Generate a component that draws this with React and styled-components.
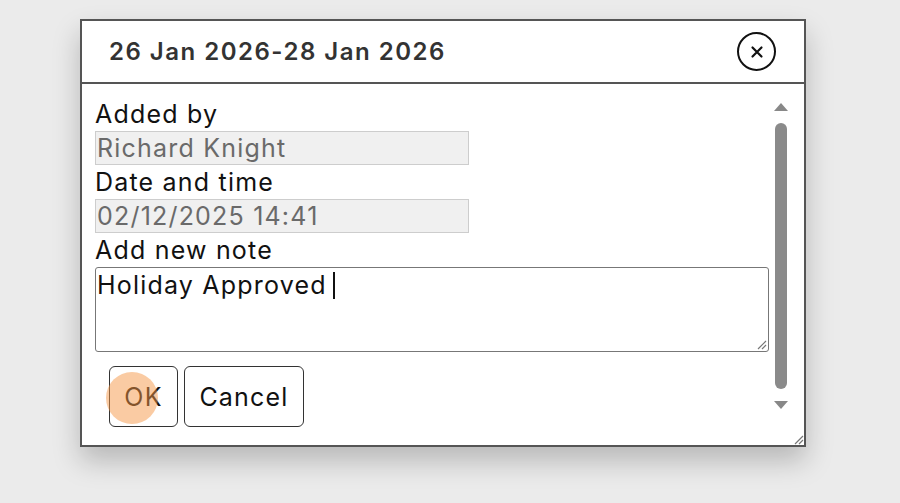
import React from 'react';
import styled, { createGlobalStyle } from 'styled-components';

const GlobalStyle = createGlobalStyle`
  body {
    margin: 0;
    background: #ebebeb;
    font-family: Inter, "Noto Sans", sans-serif;
    letter-spacing: 1.2px;
  }
`;

const Page = styled.div`
  height: 503px;
  padding: 19px 0 0 80px;
  box-sizing: border-box;
  overflow: hidden;
`;

const Dialog = styled.div`
  position: relative;
  width: 726px;
  height: 428px;
  box-sizing: border-box;
  border: 2px solid #555;
  background: #fff;
  box-shadow: 0 14px 26px rgba(0, 0, 0, 0.22);
  display: flex;
  flex-direction: column;
`;

const Header = styled.div`
  height: 61px;
  flex-shrink: 0;
  border-bottom: 2px solid #555;
  display: flex;
  align-items: center;
  justify-content: space-between;
  padding: 0 28px 0 27px;
`;

const Title = styled.h1`
  margin: 0;
  font-size: 24px;
  font-weight: 600;
  color: #333;
  letter-spacing: 1.5px;
`;

const CloseButton = styled.button`
  width: 39px;
  height: 39px;
  border-radius: 50%;
  border: 2px solid #111;
  background: #fff;
  display: flex;
  align-items: center;
  justify-content: center;
  padding: 0;
`;

const Body = styled.div`
  flex: 1;
  display: flex;
`;

const Content = styled.div`
  flex: 1;
  padding: 13px 0 0 13px;
  display: flex;
  flex-direction: column;
  align-items: flex-start;
`;

const Label = styled.div`
  height: 34px;
  line-height: 34px;
  font-size: 25px;
  color: #111;
`;

const ReadOnlyField = styled.div`
  width: 374px;
  height: 34px;
  box-sizing: border-box;
  background: #f0f0f0;
  border: 1px solid #cdcdcd;
  padding: 0 1px;
  line-height: 32px;
  font-size: 25px;
  color: #6a6a6a;
`;

const NoteArea = styled.div`
  position: relative;
  width: 674px;
  height: 85px;
  box-sizing: border-box;
  border: 1px solid #777;
  border-radius: 3px;
  padding: 0 1px;
  line-height: 34px;
  font-size: 25px;
  color: #111;
`;

const Caret = styled.span`
  display: inline-block;
  width: 2px;
  height: 27px;
  margin-left: 6px;
  background: #111;
  vertical-align: -5px;
`;

const Grip = styled.svg`
  position: absolute;
  right: 1px;
  bottom: 1px;
`;

const Actions = styled.div`
  display: flex;
  gap: 6px;
  margin: 14px 0 0 14px;
`;

const Button = styled.button`
  position: relative;
  height: 61px;
  width: ${p => p.$w}px;
  border: 1px solid #333;
  border-radius: 6px;
  background: #fff;
  font-family: inherit;
  font-size: 25px;
  letter-spacing: 1.2px;
  color: #111;
  padding: 0;
`;

const ClickMark = styled.span`
  position: absolute;
  left: -4px;
  top: 5px;
  width: 52px;
  height: 52px;
  border-radius: 50%;
  background: rgba(246, 152, 72, 0.5);
`;

const Scrollbar = styled.div`
  width: 34px;
  display: flex;
  flex-direction: column;
  align-items: center;
  padding: 19px 12px 24px 0;
  box-sizing: border-box;
  gap: 12px;
`;

const Arrow = styled.div`
  width: 0;
  height: 0;
  border-left: 7px solid transparent;
  border-right: 7px solid transparent;
  ${p => (p.$down ? 'border-top: 8px solid #888;' : 'border-bottom: 8px solid #888;')}
`;

const Thumb = styled.div`
  width: 12px;
  height: 266px;
  border-radius: 6px;
  background: #8a8a8a;
`;

const ResizeGrip = ({ style }) => (
  <Grip width="12" height="12" viewBox="0 0 12 12" style={style}>
    <path d="M11 3 L3 11 M11 7 L7 11" stroke="#777" strokeWidth="1.2" fill="none" />
  </Grip>
);

export default function App() {
  return (
    <>
      <GlobalStyle />
      <Page>
        <Dialog>
          <Header>
            <Title>26 Jan 2026-28 Jan 2026</Title>
            <CloseButton aria-label="Close">
              <svg width="16" height="16" viewBox="0 0 16 16">
                <path d="M3.5 3.5 L12.5 12.5 M12.5 3.5 L3.5 12.5" stroke="#111" strokeWidth="2.2" strokeLinecap="round" />
              </svg>
            </CloseButton>
          </Header>
          <Body>
            <Content>
              <Label>Added by</Label>
              <ReadOnlyField>Richard Knight</ReadOnlyField>
              <Label>Date and time</Label>
              <ReadOnlyField>02/12/2025 14:41</ReadOnlyField>
              <Label>Add new note</Label>
              <NoteArea>
                Holiday Approved<Caret />
                <ResizeGrip />
              </NoteArea>
              <Actions>
                <Button $w={69}>
                  <ClickMark />
                  OK
                </Button>
                <Button $w={120}>Cancel</Button>
              </Actions>
            </Content>
            <Scrollbar>
              <Arrow />
              <Thumb />
              <Arrow $down />
            </Scrollbar>
          </Body>
          <ResizeGrip style={{ right: 0, bottom: 0 }} />
        </Dialog>
      </Page>
    </>
  );
}
